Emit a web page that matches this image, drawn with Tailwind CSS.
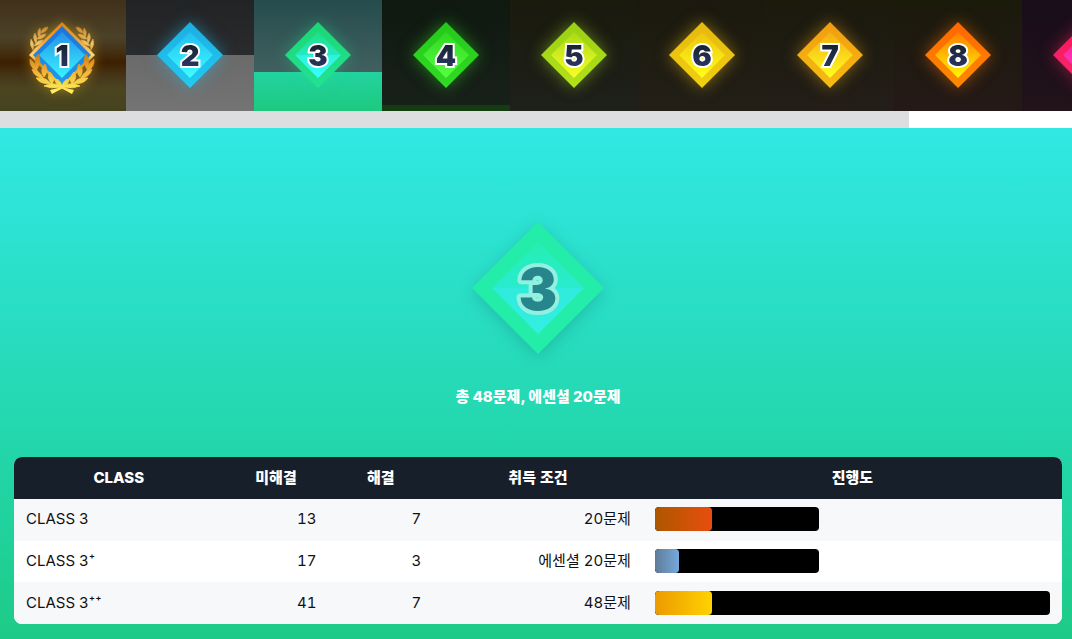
<!DOCTYPE html>
<html lang="ko">
<head>
<meta charset="utf-8">
<meta name="viewport" content="width=device-width, initial-scale=1">
<title>CLASS 3</title>
<script src="https://cdn.jsdelivr.net/npm/@tailwindcss/browser@4"></script>
</head>
<body class="min-h-screen flex flex-col overflow-x-hidden bg-[#1dcb87] font-['Inter','Noto_Sans_CJK_KR',sans-serif] text-[15px] leading-6 text-[#111]">

<!-- shared gradients and shapes -->
<svg class="absolute size-0" aria-hidden="true">
  <defs>
    <linearGradient id="ink" x1="0" y1="0" x2="0" y2="1"><stop offset=".2" stop-color="#18232f"/><stop offset=".8" stop-color="#2a3563"/></linearGradient>
    <linearGradient id="gold" x1="0" y1="0" x2="0" y2="1"><stop offset="0" stop-color="#d98110"/><stop offset=".3" stop-color="#f2a63a"/><stop offset=".5" stop-color="#ffd77a"/><stop offset=".62" stop-color="#e08a14"/><stop offset="1" stop-color="#fff04a"/></linearGradient>
    <linearGradient id="leafUp" gradientUnits="userSpaceOnUse" x1="0" y1="-28" x2="0" y2="0"><stop offset="0" stop-color="#c9892c"/><stop offset=".6" stop-color="#efc66a"/><stop offset="1" stop-color="#c8861e"/></linearGradient>
    <linearGradient id="leafDown" gradientUnits="userSpaceOnUse" x1="0" y1="0" x2="0" y2="38"><stop offset="0" stop-color="#d57c10"/><stop offset=".45" stop-color="#f3b53a"/><stop offset="1" stop-color="#fff45c"/></linearGradient>
    <linearGradient id="o1" x1="0" y1="0" x2="0" y2="1"><stop offset="0" stop-color="#1d72dc"/><stop offset="1" stop-color="#1e9cec"/></linearGradient>
    <linearGradient id="i1" x1="0" y1="0" x2="0" y2="1"><stop offset="0" stop-color="#2490e8"/><stop offset="1" stop-color="#3af4ff"/></linearGradient>
    <linearGradient id="o2" x1="0" y1="0" x2="0" y2="1"><stop offset="0" stop-color="#1caee2"/><stop offset="1" stop-color="#22cbf2"/></linearGradient>
    <linearGradient id="i2" x1="0" y1="0" x2="0" y2="1"><stop offset="0" stop-color="#22bdf0"/><stop offset="1" stop-color="#3effff"/></linearGradient>
    <linearGradient id="o3" x1="0" y1="0" x2="0" y2="1"><stop offset="0" stop-color="#1bd673"/><stop offset="1" stop-color="#22e394"/></linearGradient>
    <linearGradient id="i3" x1="0" y1="0" x2="0" y2="1"><stop offset="0" stop-color="#1fdf84"/><stop offset=".5" stop-color="#24e9c0"/><stop offset=".5" stop-color="#2af3dc"/><stop offset="1" stop-color="#38ffff"/></linearGradient>
    <linearGradient id="i3big" x1="0" y1="0" x2="0" y2="1"><stop offset="0" stop-color="#25efb2"/><stop offset=".5" stop-color="#29ebcf"/><stop offset=".5" stop-color="#2eebdc"/><stop offset="1" stop-color="#33efe2"/></linearGradient>
    <linearGradient id="o4" x1="0" y1="0" x2="0" y2="1"><stop offset="0" stop-color="#24c81a"/><stop offset="1" stop-color="#31dc24"/></linearGradient>
    <linearGradient id="i4" x1="0" y1="0" x2="0" y2="1"><stop offset="0" stop-color="#2fd820"/><stop offset="1" stop-color="#58ff42"/></linearGradient>
    <linearGradient id="o5" x1="0" y1="0" x2="0" y2="1"><stop offset="0" stop-color="#98d013"/><stop offset="1" stop-color="#b4e21a"/></linearGradient>
    <linearGradient id="i5" x1="0" y1="0" x2="0" y2="1"><stop offset="0" stop-color="#a8da14"/><stop offset="1" stop-color="#faff28"/></linearGradient>
    <linearGradient id="o6" x1="0" y1="0" x2="0" y2="1"><stop offset="0" stop-color="#e6b80e"/><stop offset="1" stop-color="#f2d011"/></linearGradient>
    <linearGradient id="i6" x1="0" y1="0" x2="0" y2="1"><stop offset="0" stop-color="#ecc410"/><stop offset="1" stop-color="#ffff18"/></linearGradient>
    <linearGradient id="o7" x1="0" y1="0" x2="0" y2="1"><stop offset="0" stop-color="#f29c10"/><stop offset="1" stop-color="#f6bd12"/></linearGradient>
    <linearGradient id="i7" x1="0" y1="0" x2="0" y2="1"><stop offset="0" stop-color="#f4ae12"/><stop offset="1" stop-color="#ffff22"/></linearGradient>
    <linearGradient id="o8" x1="0" y1="0" x2="0" y2="1"><stop offset="0" stop-color="#ff6500"/><stop offset="1" stop-color="#ff8b00"/></linearGradient>
    <linearGradient id="i8" x1="0" y1="0" x2="0" y2="1"><stop offset="0" stop-color="#ff7c00"/><stop offset="1" stop-color="#fff800"/></linearGradient>
    <linearGradient id="o9" x1="0" y1="0" x2="0" y2="1"><stop offset="0" stop-color="#f61458"/><stop offset="1" stop-color="#f82a70"/></linearGradient>
    <linearGradient id="i9" x1="0" y1="0" x2="0" y2="1"><stop offset="0" stop-color="#fa1c80"/><stop offset="1" stop-color="#ff40d8"/></linearGradient>
    <path id="outer" d="M0-33 33 0 0 33-33 0Z"/>
    <path id="inner" d="M0-23 23 0 0 23-23 0Z"/>
    <g id="sprigUp" fill="url(#leafUp)" stroke="url(#leafUp)" stroke-width=".5">
      <path d="M-14-28Q-20-28-21-22Q-15-23-14-28Z"/>
      <path d="M-22-27Q-26-23-23-18Q-20-22-22-27Z"/>
      <path d="M-16-21Q-22-21-25-16Q-18-16-16-21Z"/>
      <path d="M-27-22Q-30-17-26-12Q-24-17-27-22Z"/>
      <path d="M-19-15Q-25-15-28-9Q-21-10-19-15Z"/>
      <path d="M-31-16Q-33-10-29-5Q-27-11-31-16Z"/>
      <path d="M-22-9Q-28-8-30-2Q-23-4-22-9Z"/>
    </g>
    <g id="sprigDown" fill="url(#leafDown)" stroke="url(#leafDown)" stroke-width=".8" stroke-linejoin="round">
      <path d="M-32 4Q-33 12-25 16Q-26 8-32 4Z"/>
      <path d="M-24-1Q-29 6-25 14Q-20 7-24-1Z"/>
      <path d="M-30 14Q-28 22-19 23Q-22 16-30 14Z"/>
      <path d="M-17 9Q-23 15-18 22Q-13 16-17 9Z"/>
      <path d="M-26 23Q-21 30-12 28Q-16 22-26 23Z"/>
      <path d="M-12 17Q-16 23-10 29Q-6 23-12 17Z"/>
      <path d="M-18 31Q-11 34-2 32Q-8 26-18 31Z"/>
      <path d="M-5 24Q-9 28-1 33Q1 28-5 24Z"/>
      <path d="M-28 8Q-21 28 0 32L12 35 10 39-1 33Q-23 29-28 8Z" stroke="none"/>
    </g>
  </defs>
</svg>

<nav aria-label="CLASS" class="bg-white overflow-hidden">
  <div class="flex -ml-0.5 h-[111px] [&>a]:w-32 [&>a]:shrink-0 [&>a]:pb-px [&>a]:flex [&>a]:items-center [&>a]:justify-center [&_svg]:size-20 [&_text]:font-['Inter'] [&_text]:font-black [&_text]:text-[29px]">
    <a href="#c1" aria-label="CLASS 1" class="bg-[linear-gradient(#41301a,#4b4228_33%,#47371b_42%,#3c2000_56%,#46381a_70%,#4b451f_80%,#45431f)]">
      <svg viewBox="-40 -40 80 80" class="drop-shadow-[0_0_6px_#d8a02099]"><use href="#sprigUp"/><use href="#sprigUp" transform="scale(-1 1)"/><use href="#outer" fill="url(#gold)"/><path d="M0-29 29 0 0 30-29 0Z" fill="url(#o1)"/><use href="#inner" fill="url(#i1)"/><use href="#sprigDown"/><use href="#sprigDown" transform="scale(-1 1)"/><text y="11" text-anchor="middle" fill="url(#ink)" stroke="#fff" stroke-width="4" paint-order="stroke">1</text></svg></a>
    <a href="#c2" aria-label="CLASS 2" class="bg-[linear-gradient(#222325,#2a2b2d_55px,#6a6a6a_55px,#747474)]">
      <svg viewBox="-40 -40 80 80" class="drop-shadow-[0_0_8px_#20c0f080]"><use href="#outer" fill="url(#o2)"/><use href="#inner" fill="url(#i2)"/><text y="11" text-anchor="middle" fill="url(#ink)" stroke="#fff" stroke-width="4" paint-order="stroke">2</text></svg></a>
    <a href="#c3" aria-label="CLASS 3" aria-current="page" class="bg-[linear-gradient(#264c4d,#41605f_72px,#22d3a0_72px,#1dc97f)]">
      <svg viewBox="-40 -40 80 80" class="drop-shadow-[0_0_8px_#20e09066]"><use href="#outer" fill="url(#o3)"/><use href="#inner" fill="url(#i3)"/><text y="11" text-anchor="middle" fill="url(#ink)" stroke="#fff" stroke-width="4" paint-order="stroke">3</text></svg></a>
    <a href="#c4" aria-label="CLASS 4" class="bg-[linear-gradient(#0f1910,#18201a_105px,#133d10_105px)]">
      <svg viewBox="-40 -40 80 80" class="drop-shadow-[0_0_8px_#30e02080]"><use href="#outer" fill="url(#o4)"/><use href="#inner" fill="url(#i4)"/><text y="11" text-anchor="middle" fill="url(#ink)" stroke="#fff" stroke-width="4" paint-order="stroke">4</text></svg></a>
    <a href="#c5" aria-label="CLASS 5" class="bg-linear-to-b from-[#1a1a0d] to-[#1e201a]">
      <svg viewBox="-40 -40 80 80" class="drop-shadow-[0_0_8px_#a8e02080]"><use href="#outer" fill="url(#o5)"/><use href="#inner" fill="url(#i5)"/><text y="11" text-anchor="middle" fill="url(#ink)" stroke="#fff" stroke-width="4" paint-order="stroke">5</text></svg></a>
    <a href="#c6" aria-label="CLASS 6" class="bg-linear-to-b from-[#1b190d] to-[#231f17]">
      <svg viewBox="-40 -40 80 80" class="drop-shadow-[0_0_8px_#f0c01080]"><use href="#outer" fill="url(#o6)"/><use href="#inner" fill="url(#i6)"/><text y="11" text-anchor="middle" fill="url(#ink)" stroke="#fff" stroke-width="4" paint-order="stroke">6</text></svg></a>
    <a href="#c7" aria-label="CLASS 7" class="bg-linear-to-b from-[#1b1a0d] to-[#231e18]">
      <svg viewBox="-40 -40 80 80" class="drop-shadow-[0_0_8px_#f0a81080]"><use href="#outer" fill="url(#o7)"/><use href="#inner" fill="url(#i7)"/><text y="11" text-anchor="middle" fill="url(#ink)" stroke="#fff" stroke-width="4" paint-order="stroke">7</text></svg></a>
    <a href="#c8" aria-label="CLASS 8" class="bg-linear-to-b from-[#1a1a0b] to-[#251917]">
      <svg viewBox="-40 -40 80 80" class="drop-shadow-[0_0_8px_#ff780080]"><use href="#outer" fill="url(#o8)"/><use href="#inner" fill="url(#i8)"/><text y="11" text-anchor="middle" fill="url(#ink)" stroke="#fff" stroke-width="4" paint-order="stroke">8</text></svg></a>
    <a href="#c9" aria-label="CLASS 9" class="bg-linear-to-b from-[#190d1a] to-[#22131a]">
      <svg viewBox="-40 -40 80 80" class="drop-shadow-[0_0_8px_#ff206080]"><use href="#outer" fill="url(#o9)"/><use href="#inner" fill="url(#i9)"/></svg></a>
  </div>
  <div class="h-[17px]"><div class="h-full bg-[#dddee0]" style="width:84.8%"></div></div>
</nav>

<main class="grow flex flex-col items-center pl-[14px] pr-[10px] pt-[84px] pb-[15px] bg-linear-to-b from-[#31e8e4] to-[#1dcb87]">
  <svg viewBox="-38 -38 76 76" role="img" aria-label="CLASS 3" class="size-[152px] drop-shadow-[0_4px_8px_#00404033]">
    <use href="#outer" fill="#24eda9"/>
    <use href="#inner" fill="url(#i3big)"/>
    <text y="11" text-anchor="middle" fill="#27868c" stroke="#93efe0" stroke-width="4" stroke-linejoin="round" paint-order="stroke" class="font-['Inter'] font-black text-[29px]">3</text>
  </svg>
  <p class="mt-[21px] font-extrabold text-white">총 48문제, 에센셜 20문제</p>

  <div class="mt-12 w-full rounded-lg overflow-hidden">
    <table class="w-full h-[167px] table-fixed bg-white tabular-nums [&_th]:px-3 [&_th]:h-[42px] [&_th]:font-extrabold [&_td]:px-3 [&_td]:pt-2 [&_td]:pb-[9px]">
      <colgroup><col class="w-1/5"><col class="w-1/10"><col class="w-1/10"><col class="w-1/5"><col class="w-2/5"></colgroup>
      <thead class="bg-[#17202a] text-white">
        <tr><th scope="col">CLASS</th><th scope="col">미해결</th><th scope="col">해결</th><th scope="col">취득 조건</th><th scope="col">진행도</th></tr>
      </thead>
      <tbody class="text-right">
        <tr class="bg-[#f7f8fa]"><td class="text-left">CLASS 3</td><td>13</td><td>7</td><td>20문제</td>
          <td><div class="h-6 rounded-sm bg-black overflow-hidden" style="width:41.67%"><div class="h-full rounded-sm bg-linear-to-r from-[#ad5600] to-[#e84d0e]" style="width:35%"></div></div></td></tr>
        <tr><td class="text-left">CLASS 3⁺</td><td>17</td><td>3</td><td>에센셜 20문제</td>
          <td><div class="h-6 rounded-sm bg-black overflow-hidden" style="width:41.67%"><div class="h-full rounded-sm bg-linear-to-r from-[#5f7c98] to-[#76a9dc]" style="width:15%"></div></div></td></tr>
        <tr class="bg-[#f7f8fa]"><td class="text-left">CLASS 3⁺⁺</td><td>41</td><td>7</td><td>48문제</td>
          <td><div class="h-6 rounded-sm bg-black overflow-hidden"><div class="h-full rounded-sm bg-linear-to-r from-[#ec9a00] to-[#ffd200]" style="width:14.58%"></div></div></td></tr>
      </tbody>
    </table>
  </div>
</main>
</body>
</html>
